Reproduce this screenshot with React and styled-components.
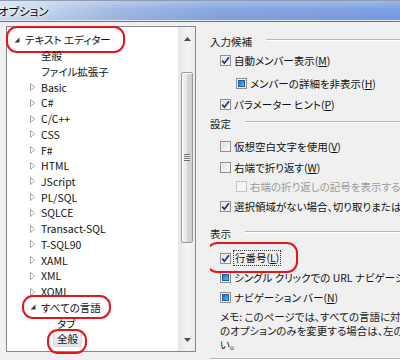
import React from "react";
import styled, { createGlobalStyle } from "styled-components";

const Global = createGlobalStyle`
  html, body { margin: 0; padding: 0; background: #f0f0f0; }
  body {
    font-family: "Noto Sans CJK JP", "Noto Sans", sans-serif;
    font-size: 10.5px;
    font-feature-settings: "palt";
    color: #111;
  }
`;

const tree = [
  { level: 0, text: "テキスト エディター", twisty: "open", mark: { l: 7, r: 14, t: 6, b: 5 } },
  { level: 1, text: "全般" },
  { level: 1, text: "ファイル拡張子" },
  { level: 1, text: "Basic", twisty: "closed" },
  { level: 1, text: "C#", twisty: "closed" },
  { level: 1, text: "C/C++", twisty: "closed" },
  { level: 1, text: "CSS", twisty: "closed" },
  { level: 1, text: "F#", twisty: "closed" },
  { level: 1, text: "HTML", twisty: "closed" },
  { level: 1, text: "JScript", twisty: "closed" },
  { level: 1, text: "PL/SQL", twisty: "closed" },
  { level: 1, text: "SQLCE", twisty: "closed" },
  { level: 1, text: "Transact-SQL", twisty: "closed" },
  { level: 1, text: "T-SQL90", twisty: "closed" },
  { level: 1, text: "XAML", twisty: "closed" },
  { level: 1, text: "XML", twisty: "closed" },
  { level: 1, text: "XOML", twisty: "closed" },
  { level: 1, text: "すべての言語", twisty: "open", mark: { l: 7, r: 10, t: 4, b: 4 } },
  { level: 2, text: "タブ" },
  { level: 2, text: "全般", selected: true, mark: { l: 7, r: 6, t: 2, b: 8 } },
];

const Twisty = ({ type }) => {
  if (type === "open")
    return (
      <svg width="6" height="6" viewBox="0 0 6 6">
        <path d="M5.5 0.5 L5.5 5.5 L0.5 5.5 Z" fill="#3c3c3c" />
      </svg>
    );
  if (type === "closed")
    return (
      <svg width="5" height="8" viewBox="0 0 5 8">
        <path d="M0.5 0.5 L4.5 4 L0.5 7.5 Z" fill="#fff" stroke="#a6a6a6" />
      </svg>
    );
  return null;
};

const Check = ({ state, disabled }) => (
  <Box $disabled={disabled}>
    {state === "checked" && (
      <svg width="9" height="9" viewBox="0 0 9 9">
        <path d="M1.2 4.6 L3.4 7.2 L8 1.2" fill="none" stroke="#1d3575" strokeWidth="1.7" />
      </svg>
    )}
    {state === "mixed" && <Mixed />}
  </Box>
);

const App = () => {
  return (
    <Window>
      <Global />
      <TitleBar>オプション</TitleBar>
      <Body>
        <TreePanel>
          <TreeList>
            {tree.map((n, i) => (
              <TreeRow key={i} $level={n.level}>
                <Content>
                  <TwistySlot>
                    <Twisty type={n.twisty} />
                  </TwistySlot>
                  <Label $selected={n.selected}>
                    {n.text}
                    {n.mark && n.selected && <Mark $o={n.mark} />}
                  </Label>
                  {n.mark && !n.selected && <Mark $o={n.mark} />}
                </Content>
              </TreeRow>
            ))}
          </TreeList>
          <ScrollBar>
            <ArrowBtn>
              <svg width="7" height="4" viewBox="0 0 7 4">
                <path d="M0 4 L3.5 0 L7 4 Z" fill="#4a4a4a" />
              </svg>
            </ArrowBtn>
            <Thumb>
              <Grip />
            </Thumb>
            <ArrowBtn $down>
              <svg width="7" height="4" viewBox="0 0 7 4">
                <path d="M0 0 L3.5 4 L7 0 Z" fill="#4a4a4a" />
              </svg>
            </ArrowBtn>
          </ScrollBar>
        </TreePanel>

        <Options>
          <GroupHead $mt={6}>入力候補</GroupHead>
          <CheckRow $mt={1}>
            <Check state="checked" />
            <span>自動メンバー表示(<u>M</u>)</span>
          </CheckRow>
          <CheckRow $mt={5} $indent>
            <Check state="mixed" />
            <span>メンバーの詳細を非表示(<u>H</u>)</span>
          </CheckRow>
          <CheckRow $mt={3}>
            <Check state="checked" />
            <span>パラメーター ヒント(<u>P</u>)</span>
          </CheckRow>

          <GroupHead $mt={1}>設定</GroupHead>
          <CheckRow $mt={5}>
            <Check />
            <span>仮想空白文字を使用(<u>V</u>)</span>
          </CheckRow>
          <CheckRow $mt={3}>
            <Check />
            <span>右端で折り返す(<u>W</u>)</span>
          </CheckRow>
          <CheckRow $mt={1} $indent $disabled>
            <Check disabled />
            <span>右端の折り返しの記号を表示する(<u>S</u>)</span>
          </CheckRow>
          <CheckRow $mt={2}>
            <Check state="checked" />
            <span>選択領域がない場合、切り取りまたはコピー時に現在の行を適用する(<u>A</u>)</span>
          </CheckRow>

          <GroupHead $mt={9}>表示</GroupHead>
          <CheckRow $mt={7}>
            <RowBody>
              <Check state="checked" />
              <Focus>行番号(<u>L</u>)</Focus>
              <Mark $o={{ l: 14, r: 18, t: 7, b: 6 }} />
            </RowBody>
          </CheckRow>
          <CheckRow $mt={1}>
            <Check state="mixed" />
            <span>シングル クリックでの URL ナビゲーションを有効にする(<u>G</u>)</span>
          </CheckRow>
          <CheckRow $mt={2}>
            <Check state="mixed" />
            <span>ナビゲーション バー(<u>N</u>)</span>
          </CheckRow>

          <Memo>
            <div>メモ: このページでは、すべての言語に対してオプションを変更します。特定の言語</div>
            <div>のオプションのみを変更する場合は、左の一覧からその言語を選択してくださ</div>
            <div>い。</div>
          </Memo>
          <Rule />
        </Options>
      </Body>
    </Window>
  );
};

export default App;

const Window = styled.div`
  width: 400px;
  height: 360px;
  overflow: hidden;
  display: flex;
  flex-direction: column;
  background: #f0f0f0;
`;

const TitleBar = styled.div`
  height: 19px;
  flex: none;
  border-top: 1px solid #8e9bb0;
  border-bottom: 1px solid #e2eaf6;
  box-shadow: 0 1px 0 #62728c;
  background:
    linear-gradient(to bottom, rgba(255,255,255,0.25), rgba(255,255,255,0) 50%, rgba(0,0,40,0.04)),
    linear-gradient(to right, #d3dff0 0%, #c2d3ec 12%, #9fb8e4 30%, #86a6e1 55%, #7b9ee2 100%);
  display: flex;
  align-items: center;
  margin-left: -2px;
  font-size: 11.5px;
  color: #000;
  text-shadow: 0 0 6px #fff, 0 0 3px #fff;
`;

const Body = styled.div`
  flex: 1;
  display: flex;
  padding: 5px 0 0 6px;
  min-height: 0;
`;

const TreePanel = styled.div`
  width: 190px;
  height: 326px;
  flex: none;
  box-sizing: border-box;
  border: 1px solid #828790;
  background: #fff;
  display: flex;
`;

const TreeList = styled.div`
  flex: 1;
  padding-top: 5px;
`;

const TreeRow = styled.div`
  height: 15.74px;
  display: flex;
  align-items: center;
  padding-left: ${(p) => 6 + p.$level * 16}px;
  white-space: nowrap;
`;

const Content = styled.span`
  position: relative;
  display: inline-flex;
  align-items: center;
  height: 100%;
`;

const TwistySlot = styled.span`
  width: 12px;
  display: inline-flex;
  align-items: center;
  justify-content: flex-start;
  padding-left: 1px;
  box-sizing: border-box;
`;

const Label = styled.span`
  position: relative;
  line-height: 13px;
  padding: ${(p) => (p.$selected ? "1px 3px" : "0")};
  margin-left: ${(p) => (p.$selected ? "-4px" : "0")};
  border: ${(p) => (p.$selected ? "1px solid #d9d9d9" : "none")};
  border-radius: 2px;
  background: ${(p) => (p.$selected ? "linear-gradient(#f6f6f6, #e3e3e3)" : "none")};
`;

const Mark = styled.span`
  position: absolute;
  left: ${(p) => -p.$o.l}px;
  right: ${(p) => -p.$o.r}px;
  top: ${(p) => -p.$o.t}px;
  bottom: ${(p) => -p.$o.b}px;
  border: 2px solid #e4141d;
  border-radius: 11px;
  pointer-events: none;
`;

const ScrollBar = styled.div`
  width: 16px;
  flex: none;
  border-left: 1px solid #e6e6e6;
  background: linear-gradient(to right, #e8e8e8, #f4f4f4 60%, #ececec);
  display: flex;
  flex-direction: column;
  align-items: center;
`;

const ArrowBtn = styled.div`
  height: 19px;
  width: 100%;
  display: flex;
  align-items: center;
  justify-content: center;
  margin-top: ${(p) => (p.$down ? "auto" : "0")};
  padding-bottom: ${(p) => (p.$down ? "4px" : "0")};
  padding-top: ${(p) => (p.$down ? "0" : "4px")};
  box-sizing: border-box;
`;

const Thumb = styled.div`
  margin-top: 26px;
  width: 12px;
  height: 171px;
  box-sizing: border-box;
  border: 1px solid #9a9a9a;
  border-radius: 2px;
  background: linear-gradient(to right, #f4f4f4, #e6e6e6 50%, #d6d6d6 51%, #cfcfcf);
  box-shadow: inset 1px 1px 0 #fff;
  display: flex;
  align-items: center;
  justify-content: center;
`;

const Grip = styled.div`
  width: 6px;
  height: 7px;
  background: repeating-linear-gradient(to bottom, #6d6d6d 0 1px, #f4f4f4 1px 2px);
`;

const Options = styled.div`
  flex: 1;
  min-width: 0;
  overflow: hidden;
  margin-left: 14px;
  display: flex;
  flex-direction: column;
`;

const GroupHead = styled.div`
  height: 18px;
  margin-top: ${(p) => p.$mt}px;
  display: flex;
  align-items: center;
  gap: 14px;
  white-space: nowrap;
  color: #1a1a1a;
  &::after {
    content: "";
    flex: 1;
    height: 1px;
    margin-top: -3px;
    background: #b4b9c0;
    box-shadow: 0 1px 0 #fff;
  }
`;

const CheckRow = styled.div`
  height: 18px;
  margin-top: ${(p) => p.$mt}px;
  padding-left: ${(p) => (p.$indent ? 26 : 10)}px;
  display: flex;
  align-items: center;
  gap: 3px;
  white-space: nowrap;
  color: ${(p) => (p.$disabled ? "#9a9a9a" : "#111")};
  u { text-underline-offset: 1px; }
`;

const RowBody = styled.span`
  position: relative;
  display: inline-flex;
  align-items: center;
  gap: 3px;
  height: 100%;
`;

const Box = styled.span`
  width: 11px;
  height: 11px;
  flex: none;
  box-sizing: border-box;
  border: 1px solid ${(p) => (p.$disabled ? "#c4c4c4" : "#8f8f8f")};
  background: ${(p) =>
    p.$disabled
      ? "linear-gradient(135deg, #f0f0f0, #fbfbfb)"
      : "linear-gradient(135deg, #d8d8d8, #f6f6f6 70%, #fdfdfd)"};
  box-shadow: inset 0 0 0 1px ${(p) => (p.$disabled ? "#f7f7f7" : "#f2f2f2")};
  display: inline-flex;
  align-items: center;
  justify-content: center;
`;

const Mixed = styled.span`
  width: 7px;
  height: 7px;
  box-sizing: border-box;
  border: 1px solid #1f5c9c;
  background: linear-gradient(135deg, #1f74c4, #3aa0e6 60%, #6bc2f2);
`;

const Focus = styled.span`
  outline: 1px dotted #333;
  outline-offset: 0;
  padding: 0 1px;
  line-height: 14px;
`;

const Memo = styled.div`
  margin-top: 4px;
  padding-left: 10px;
  line-height: 14px;
  white-space: nowrap;
  color: #1a1a1a;
`;

const Rule = styled.div`
  margin-top: 6px;
  height: 1px;
  background: #b4b9c0;
  box-shadow: 0 1px 0 #fff;
`;
